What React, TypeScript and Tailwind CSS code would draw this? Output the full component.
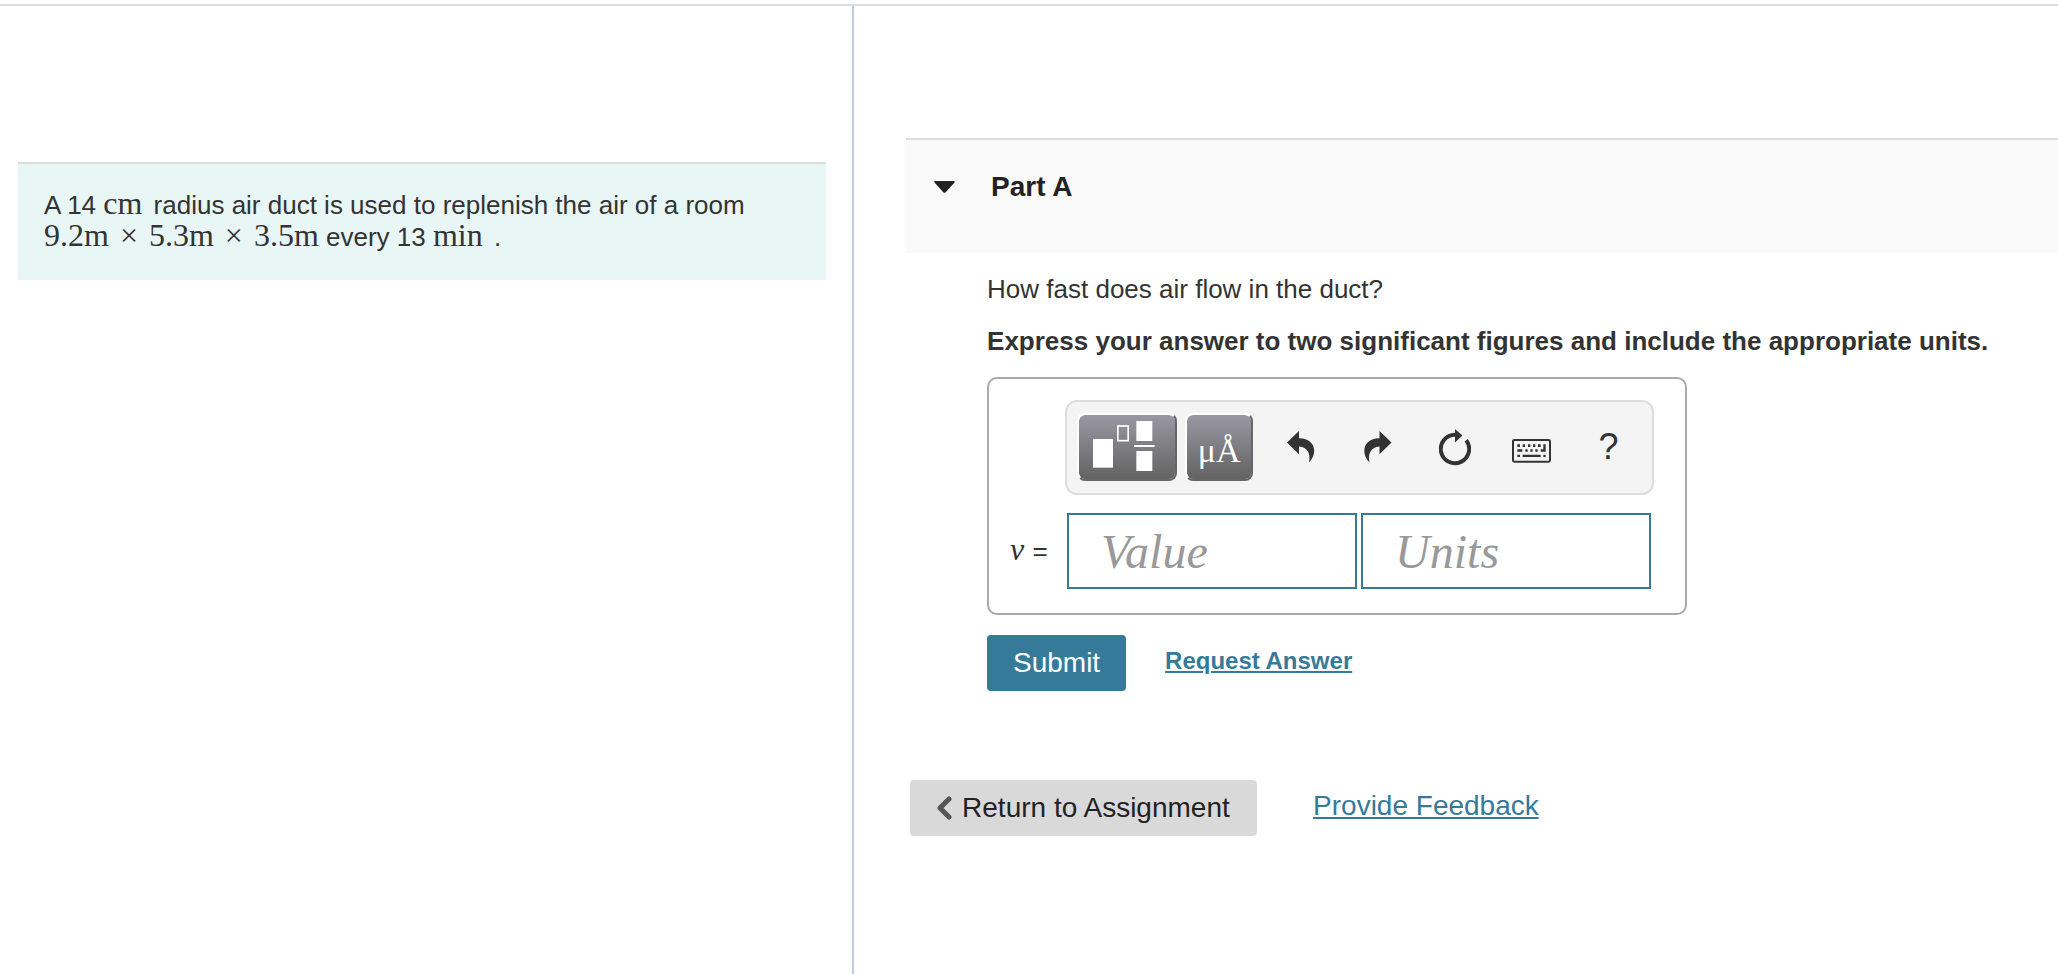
import type { ReactNode } from "react";

interface ToolButtonProps {
  label: string;
  children: ReactNode;
}

function MathText({ children }: { children: ReactNode }) {
  return (
    <span className="font-['Liberation_Serif',serif] text-[32px] leading-[0]">{children}</span>
  );
}

function Times() {
  return <span className="mx-[3px]"> × </span>;
}

function ToolButton({ label, children }: ToolButtonProps) {
  return (
    <button
      type="button"
      aria-label={label}
      className="flex h-[68px] w-[77px] items-center justify-center text-[36px] text-[#333]"
    >
      {children}
    </button>
  );
}

function TemplatesIcon() {
  return (
    <svg viewBox="336 153 210 156" className="h-[52px] w-[70px]" fill="white">
      <rect x="339" y="207" width="60" height="86" />
      <rect x="413.5" y="168" width="31" height="44" fill="none" stroke="white" strokeWidth="5" />
      <rect x="469" y="153" width="48" height="60" />
      <rect x="462" y="225" width="62" height="6" />
      <rect x="469" y="243" width="48" height="60" />
    </svg>
  );
}

function UndoIcon() {
  return (
    <svg viewBox="0 0 28 32" className="h-8 w-7" fill="currentColor">
      <path d="M0 11.6 12 0v7.2C21 7 27 12 27.2 19.5 27.3 24 25 28.5 22 31.3 24 23 20.5 15.6 12 15.4V23.2Z" />
    </svg>
  );
}

function RedoIcon() {
  return (
    <svg viewBox="0 0 28 32" className="h-8 w-7" fill="currentColor">
      <path d="M27.5 11.6 15.5 0v7.2C6.5 7 .5 12 .3 19.5 .2 24 2.5 28.5 5.5 31.3 3.5 23 7 15.6 15.5 15.4V23.2Z" />
    </svg>
  );
}

function ResetIcon() {
  return (
    <svg viewBox="0 0 32 37" className="h-[37px] w-8">
      <path d="M27.2 11.3A14.2 14.2 0 1 1 16 5.8" fill="none" stroke="currentColor" strokeWidth="4" />
      <path d="M16 0 23.4 6.5 16 13.4Z" fill="currentColor" />
    </svg>
  );
}

function KeyboardIcon() {
  return (
    <svg viewBox="0 0 117 72" className="mt-2 h-6 w-[39px]" fill="currentColor">
      <rect x="3" y="3" width="111" height="65" rx="4" fill="none" stroke="currentColor" strokeWidth="6" />
      <path d="M16 16h8v8h-8zM32 16h7v8h-7zM48 16h7v8h-7zM63 16h7v8h-7zM78 16h8v8h-8zM94 16h7v22H86v-7h8z" />
      <path d="M16 31h15v7H16zM40 31h7v7h-7zM55 31h7v7h-7zM70 31h7v7h-7z" />
      <path d="M16 47h8v7h-8zM32 47h54v7H32zM94 47h7v7h-7z" />
    </svg>
  );
}

function Problem() {
  return (
    <div className="mt-[156px] mr-[26px] ml-[18px] border-t-2 border-[#ddd] bg-[#e8f6f6] px-[26px] pt-[25px] pb-[27px]">
      <p className="text-[26px] leading-8">
        A 14 <MathText>cm</MathText>
        <span className="ml-1"> radius air duct is used to replenish the air of a room</span>
        <br />
        <MathText>9.2m<Times />5.3m<Times />3.5m</MathText> every 13 <MathText>min</MathText>
        <span className="ml-1"> .</span>
      </p>
    </div>
  );
}

function Toolbar() {
  return (
    <div className="ml-[76px] flex h-[95px] w-[589px] items-start rounded-xl border-2 border-[#ddd] bg-[#f4f4f4] pt-[11px] pl-[10px]">
      <button
        type="button"
        aria-label="Templates"
        className="mr-2 flex h-[68px] w-[100px] items-center justify-center rounded-lg border-2 border-t-white border-r-[#666] border-b-[#666] border-l-white bg-linear-to-b from-[#9a98a3] to-[#636363] bg-clip-padding"
      >
        <TemplatesIcon />
      </button>
      <button
        type="button"
        aria-label="Units and symbols"
        className="mr-[9px] h-[68px] w-[68px] rounded-lg border-2 border-t-white border-r-[#666] border-b-[#666] border-l-white bg-linear-to-b from-[#9a98a3] to-[#636363] bg-clip-padding pt-2 font-['Liberation_Serif',serif] text-[34px] leading-none text-white"
      >
        μÅ
      </button>
      <ToolButton label="Undo"><UndoIcon /></ToolButton>
      <ToolButton label="Redo"><RedoIcon /></ToolButton>
      <ToolButton label="Reset"><ResetIcon /></ToolButton>
      <ToolButton label="Keyboard shortcuts"><KeyboardIcon /></ToolButton>
      <ToolButton label="Help">?</ToolButton>
    </div>
  );
}

const fieldClass =
  "h-[76px] w-[290px] border-2 border-[#367a9a] bg-white pl-8 font-['Liberation_Serif',serif] text-[48px] italic placeholder:text-[#999] placeholder:opacity-100";

function AnswerBox() {
  return (
    <div className="mt-5 w-[700px] rounded-[10px] border-2 border-[#aaa] pt-[21px] pb-6">
      <Toolbar />
      <div className="mt-[18px] flex items-center">
        <label htmlFor="value" className="w-[78px] pl-[21px] text-[26px] leading-8">
          <MathText><i className="mr-px">v</i></MathText> =
        </label>
        <input id="value" type="text" placeholder="Value" className={fieldClass} />
        <input type="text" aria-label="Units" placeholder="Units" className={`ml-1 ${fieldClass}`} />
      </div>
    </div>
  );
}

export default function App() {
  return (
    <div className="min-h-screen bg-white pt-1 font-['Liberation_Sans',Arial,sans-serif] text-[#333]">
      <div className="flex min-h-[calc(100vh-4px)] border-t-2 border-[#ddd]">
        <section className="w-[41.5%] shrink-0 border-r-2 border-[#becbdd]">
          <Problem />
        </section>

        <main className="min-w-0 flex-1 pt-33 pl-[52px]">
          <h2 className="border-t-2 border-[#ddd] bg-[#f9f9f9] pt-[31px] pb-[50px] pl-7 text-[#222]">
            <button type="button" className="flex items-center text-[28px] leading-8 font-bold">
              <svg viewBox="0 0 21 12" className="mr-9 h-3 w-[21px]" fill="currentColor">
                <path d="M1.3 0H19.7Q21.5 .3 20.3 1.8L11.7 11.2Q10.5 12.3 9.3 11.2L.7 1.8Q-.5 .3 1.3 0Z" />
              </svg>
              Part A
            </button>
          </h2>

          <div className="pl-[81px] text-[26px] leading-8">
            <p className="mt-5">How fast does air flow in the duct?</p>
            <p className="mt-5 font-bold">
              Express your answer to two significant figures and include the appropriate units.
            </p>
            <AnswerBox />
            <div className="mt-5 flex items-center">
              <button type="button" className="h-14 w-[139px] rounded bg-[#367a9a] text-[28px] text-white">
                Submit
              </button>
              <a href="#answer" className="mb-1 ml-[39px] text-[24px] font-bold text-[#367a9a] underline">
                Request Answer
              </a>
            </div>
          </div>

          <div className="mt-[89px] ml-1 flex items-center text-[28px] leading-8">
            <button type="button" className="flex h-14 w-[347px] items-center rounded bg-[#d9d9d9] pl-[26px] text-[#222]">
              <svg viewBox="0 0 16 24" className="mr-[10px] h-6 w-4" fill="none" stroke="#555" strokeWidth="5" strokeLinecap="round" strokeLinejoin="round">
                <path d="M13 3 4 12l9 9" />
              </svg>
              Return to Assignment
            </button>
            <a href="#feedback" className="mb-1 ml-14 text-[#367a9a] underline">
              Provide Feedback
            </a>
          </div>
        </main>
      </div>
    </div>
  );
}
